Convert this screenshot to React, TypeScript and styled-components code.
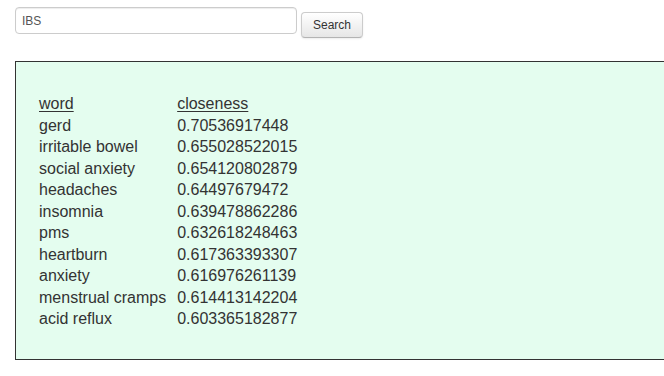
import React from 'react';
import styled, { createGlobalStyle } from 'styled-components';

const GlobalStyle = createGlobalStyle`
  html, body {
    margin: 0;
    overflow: hidden;
    background: #fff;
    font-family: 'Liberation Sans', Arial, sans-serif;
    color: #333;
  }
`;

const Page = styled.div`
  padding: 7px 0 0 15px;
`;

const SearchBar = styled.form`
  display: flex;
  align-items: flex-start;
  gap: 4px;
`;

const Input = styled.input`
  box-sizing: border-box;
  width: 282px;
  height: 27px;
  padding: 0 6px;
  border: 1px solid #ccc;
  border-radius: 4px;
  font-family: 'Liberation Sans', Arial, sans-serif;
  font-size: 12px;
  color: #555;
  box-shadow: inset 0 1px 1px rgba(0, 0, 0, 0.075);
  &:focus {
    outline: none;
  }
`;

const Button = styled.button`
  box-sizing: border-box;
  margin-top: 5px;
  width: 62px;
  height: 26px;
  padding: 0;
  border: 1px solid #ccc;
  border-bottom-color: #b3b3b3;
  border-radius: 4px;
  background: linear-gradient(#ffffff, #e6e6e6);
  box-shadow: 0 1px 2px rgba(0, 0, 0, 0.08);
  font-family: 'Liberation Sans', Arial, sans-serif;
  font-size: 12px;
  color: #333;
  cursor: pointer;
`;

const ResultBox = styled.div`
  box-sizing: border-box;
  margin-top: 23px;
  height: 299px;
  padding: 31px 23px 30px;
  border: 1px solid #333;
  border-right: none;
  background: #e4fdef;
`;

const Table = styled.div`
  display: grid;
  grid-template-columns: auto auto;
  justify-content: start;
  column-gap: 11px;
  font-size: 16px;
  line-height: 21.5px;
  color: #333;
`;

const Head = styled.span`
  text-decoration: underline;
  text-underline-offset: 2px;
`;

const rows: [string, string][] = [
  ['gerd', '0.70536917448'],
  ['irritable bowel', '0.655028522015'],
  ['social anxiety', '0.654120802879'],
  ['headaches', '0.64497679472'],
  ['insomnia', '0.639478862286'],
  ['pms', '0.632618248463'],
  ['heartburn', '0.617363393307'],
  ['anxiety', '0.616976261139'],
  ['menstrual cramps', '0.614413142204'],
  ['acid reflux', '0.603365182877'],
];

const App = () => {
  return (
    <Page>
      <GlobalStyle />
      <SearchBar onSubmit={e => e.preventDefault()}>
        <Input type="text" defaultValue="IBS" />
        <Button type="submit">Search</Button>
      </SearchBar>
      <ResultBox>
        <Table>
          <Head>word</Head>
          <Head>closeness</Head>
          {rows.map(([word, value]) => (
            <React.Fragment key={word}>
              <span>{word}</span>
              <span>{value}</span>
            </React.Fragment>
          ))}
        </Table>
      </ResultBox>
    </Page>
  );
};

export default App;
